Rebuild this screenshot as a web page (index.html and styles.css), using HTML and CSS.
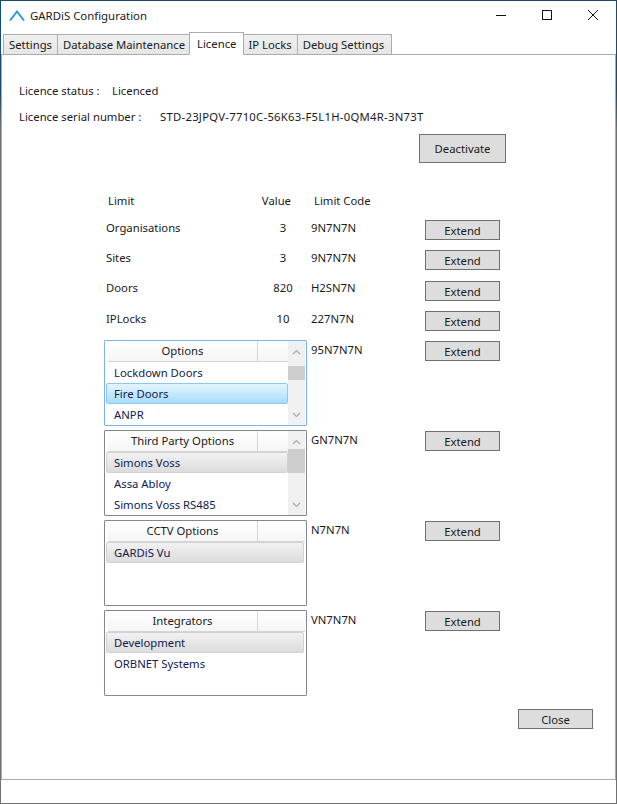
FILE: index.html
```html
<!DOCTYPE html>
<html lang="en">
<head>
<meta charset="utf-8">
<title>GARDiS Configuration</title>
<link rel="stylesheet" href="styles.css">
</head>
<body>
<div class="window">
  <header class="titlebar">
    <svg class="app-icon" width="16" height="11" viewBox="0 0 16 11"><path d="M1 10.500 L8 1.500 L15 10.500" fill="none" stroke="#3a97d6" stroke-width="2"/></svg>
    <span class="title">GARDiS Configuration</span>
    <div class="controls">
      <svg width="46" height="20" viewBox="0 0 46 20"><path d="M18 10.500H28" stroke="#111" stroke-width="1"/></svg>
      <svg width="46" height="20" viewBox="0 0 46 20"><rect x="18.500" y="5.500" width="9" height="9" fill="none" stroke="#111"/></svg>
      <svg width="46" height="20" viewBox="0 0 46 20"><path d="M18 5L28 15M28 5L18 15" stroke="#111" stroke-width="1" fill="none"/></svg>
    </div>
  </header>
  <nav class="tabs">
    <div class="tab">Settings</div>
    <div class="tab tab-db">Database Maintenance</div>
    <div class="tab active">Licence</div>
    <div class="tab tab-ip">IP Locks</div>
    <div class="tab tab-debug">Debug Settings</div>
  </nav>
  <main class="panel">
    <div class="status-row"><span class="status-label">Licence status :</span><span>Licenced</span></div>
    <div class="serial-row"><span class="serial-label">Licence serial number :</span><span class="serial">STD-23JPQV-7710C-56K63-F5L1H-0QM4R-3N73T</span></div>
    <div class="deactivate-row"><button class="btn btn-large">Deactivate</button></div>
    <div class="limits">
      <div class="head-limit">Limit</div><div class="head-value">Value</div><div class="head-code">Limit Code</div><div></div>

      <div class="name">Organisations</div><div class="value">3</div><div class="code">9N7N7N</div><button class="btn">Extend</button>
      <div class="name">Sites</div><div class="value">3</div><div class="code">9N7N7N</div><button class="btn">Extend</button>
      <div class="name">Doors</div><div class="value">820</div><div class="code">H2SN7N</div><button class="btn btn-low">Extend</button>
      <div class="name">IPLocks</div><div class="value">10</div><div class="code">227N7N</div><button class="btn">Extend</button>

      <div class="listbox focused">
        <div class="list-main">
          <div class="list-head"><span>Options</span></div>
          <div class="item">Lockdown Doors</div>
          <div class="item sel-blue">Fire Doors</div>
          <div class="item">ANPR</div>
        </div>
        <div class="scroll">
          <svg class="arrow" width="9" height="6" viewBox="0 0 9 6"><path d="M1 5L4.500 1.500L8 5" fill="none" stroke="#aaa" stroke-width="1.200"/></svg>
          <div class="thumb thumb-small"></div>
          <svg class="arrow arrow-down" width="9" height="6" viewBox="0 0 9 6"><path d="M1 1L4.500 4.500L8 1" fill="none" stroke="#aaa" stroke-width="1.200"/></svg>
        </div>
      </div>
      <div class="code code-list">95N7N7N</div><button class="btn btn-low">Extend</button>

      <div class="listbox">
        <div class="list-main">
          <div class="list-head"><span>Third Party Options</span></div>
          <div class="item sel-grey">Simons Voss</div>
          <div class="item">Assa Abloy</div>
          <div class="item">Simons Voss RS485</div>
        </div>
        <div class="scroll">
          <svg class="arrow" width="9" height="6" viewBox="0 0 9 6"><path d="M1 5L4.500 1.500L8 5" fill="none" stroke="#aaa" stroke-width="1.200"/></svg>
          <div class="thumb thumb-large"></div>
          <svg class="arrow arrow-down" width="9" height="6" viewBox="0 0 9 6"><path d="M1 1L4.500 4.500L8 1" fill="none" stroke="#aaa" stroke-width="1.200"/></svg>
        </div>
      </div>
      <div class="code code-list">GN7N7N</div><button class="btn btn-low">Extend</button>

      <div class="listbox">
        <div class="list-main wide">
          <div class="list-head"><span>CCTV Options</span></div>
          <div class="item sel-grey">GARDiS Vu</div>
        </div>
      </div>
      <div class="code code-list">N7N7N</div><button class="btn btn-low">Extend</button>

      <div class="listbox">
        <div class="list-main wide">
          <div class="list-head"><span>Integrators</span></div>
          <div class="item sel-grey">Development</div>
          <div class="item">ORBNET Systems</div>
        </div>
      </div>
      <div class="code code-list">VN7N7N</div><button class="btn btn-low">Extend</button>
    </div>
    <div class="close-row"><button class="btn">Close</button></div>
  </main>
  <footer class="statusbar"></footer>
</div>
</body>
</html>
```
FILE: styles.css
```css
* { box-sizing: border-box; }
html, body { margin: 0; padding: 0; }
body {
  width: 617px;
  height: 804px;
  overflow: hidden;
  background: #fff;
  font-family: "Noto Sans", "Open Sans", sans-serif;
  font-size: 11.3px;
  color: #1a1a1a;
}
.window {
  width: 617px;
  height: 804px;
  display: flex;
  flex-direction: column;
  border: 1px solid #707070;
  border-image: linear-gradient(#174a6c 0, #174a6c 90px, #707070 130px) 1;
  background: #fff;
}
.titlebar {
  height: 33px;
  flex: none;
  display: flex;
  align-items: center;
  padding-left: 8px;
  padding-bottom: 5px;
}
.app-icon { margin-right: 5px; }
.title { flex: 1; font-size: 11.4px; }
.controls { display: flex; }
.tabs {
  flex: none;
  height: 21px;
  display: flex;
  align-items: flex-end;
  padding-left: 2px;
  position: relative;
  z-index: 1;
  margin-bottom: -1px;
}
.tab {
  height: 21px;
  padding: 0 5px;
  display: flex;
  align-items: center;
  background: linear-gradient(#f0f0f0, #e6e6e6);
  border: 1px solid #acacac;
  margin-right: -1px;
  white-space: nowrap;
}
.tab-db { padding-right: 4px; }
.tab-ip { padding: 0 5px 0 4px; }
.tab-debug { padding: 0 7px 0 5px; }
.tab.active {
  height: 23px;
  padding: 0 7px 1px;
  background: #fff;
  border-bottom-color: #fff;
}
.panel {
  flex: 1;
  border: 1px solid #acacac;
  border-bottom: 0;
  padding: 25px 0 0 17px;
  min-height: 0;
}
.status-row { display: flex; height: 20px; align-items: center; }
.status-label { width: 93px; }
.serial-row { display: flex; height: 20px; align-items: center; margin-top: 6px; }
.serial-label { width: 141px; }
.serial { letter-spacing: 0.26px; }
.deactivate-row { display: flex; justify-content: flex-end; padding-right: 109px; margin-top: 8px; }
.btn {
  font: inherit;
  color: inherit;
  width: 75px;
  height: 20px;
  padding: 0;
  background: #dddddd;
  border: 1px solid #707070;
}
.btn-large { width: 87px; height: 29px; }
.limits {
  display: grid;
  grid-template-columns: 150px 53px 118px 75px;
  grid-template-rows: 27px 30px 30px 31px 29px 90px 90px 90px 86px;
  margin: 30px 0 0 85px;
  width: 396px;
  align-items: start;
}
.limits > div { line-height: 16px; }
.btn-low { margin-top: 1px; }
.head-limit { padding-left: 4px; }
.head-value { text-align: right; padding-right: 16px; }
.head-code { padding-left: 7px; }
.name { padding-left: 2px; }
.value { text-align: center; padding-left: 5px; }
.code { padding-left: 4px; }
.code-list { margin-top: 2px; }
.listbox {
  grid-column: span 2;
  width: 203px;
  height: 86px;
  display: flex;
  padding: 0 1px;
  background: #fff;
  border: 1px solid #828790;
  border-radius: 1px;
  color: #12204f;
}
.listbox.focused { border-color: #7eb4ea; }
.list-main { width: 182px; flex: none; }
.list-main.wide { width: 198px; }
.list-head {
  height: 21px;
  margin-left: 2px;
  border-bottom: 1px solid #d5d5d5;
  background: linear-gradient(#fff, #f5f5f5);
  display: flex;
  color: #1a1a1a;
}
.list-main.wide .list-head { margin-right: -1px; }
.list-head span {
  width: 150px;
  text-align: center;
  border-right: 1px solid #d5d5d5;
  line-height: 19px;
}
.item {
  height: 21px;
  line-height: 21px;
  padding-left: 8px;
  border-radius: 2px;
}
.sel-blue {
  background: linear-gradient(#e3f5fd, #a9ddf8);
  border: 1px solid #8dc8ee;
  line-height: 19px;
  padding-left: 7px;
}
.sel-grey {
  background: linear-gradient(#f2f2f2, #dcdcdc);
  border: 1px solid #d2d2d2;
  line-height: 19px;
  padding-left: 7px;
}
.scroll {
  width: 17px;
  background: #f0f0f0;
  display: flex;
  flex-direction: column;
  align-items: center;
}
.arrow { margin-top: 8px; flex: none; }
.arrow-down { margin-top: auto; margin-bottom: 7px; }
.thumb { width: 17px; background: #cdcdcd; flex: none; }
.thumb-small { height: 14px; margin-top: 11px; }
.thumb-large { height: 24px; margin-top: 4px; }
.close-row { display: flex; justify-content: flex-end; padding-right: 22px; margin-top: 13px; }
.statusbar {
  flex: none;
  height: 24px;
  border-top: 1px solid #acacac;
}
```
